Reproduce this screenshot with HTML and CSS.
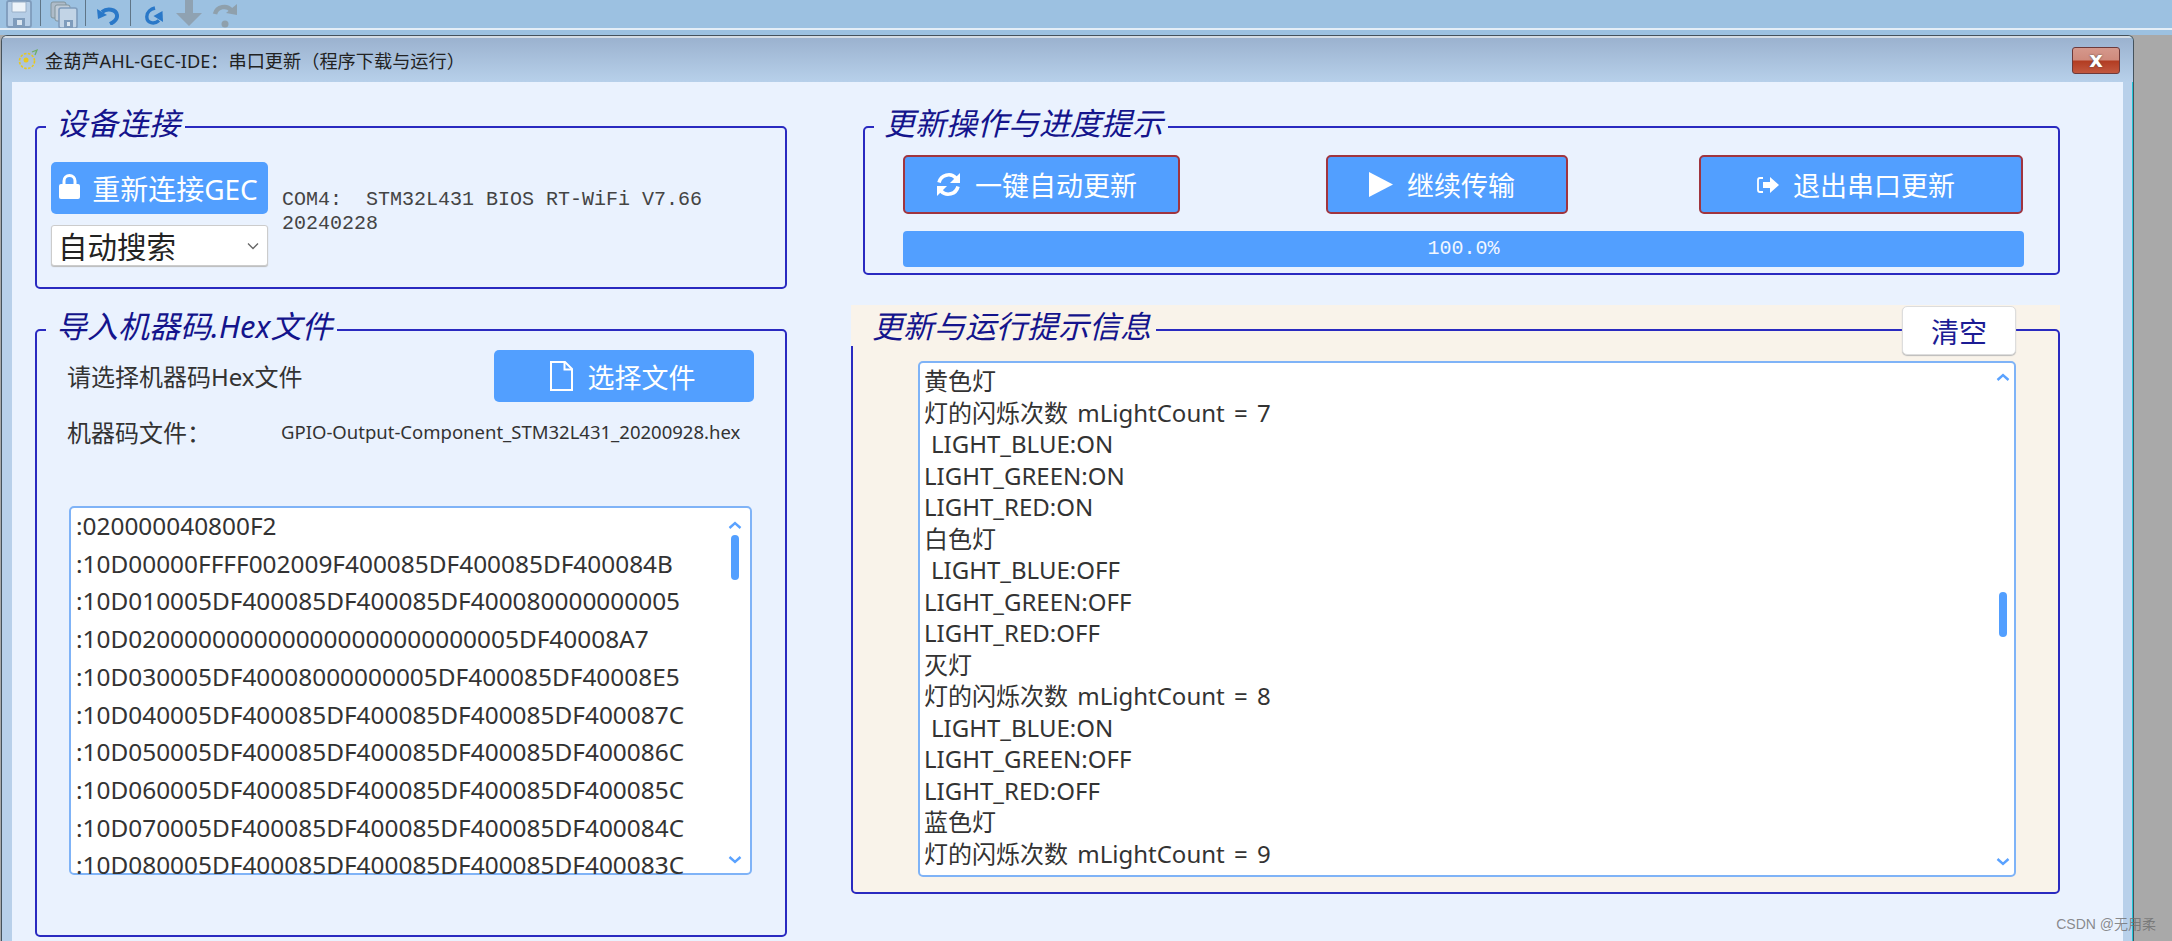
FILE: index.html
```
<!DOCTYPE html>
<html lang="zh-CN">
<head>
<meta charset="utf-8">
<title>金葫芦AHL-GEC-IDE</title>
<link rel="stylesheet" href="styles.css">
</head>
<body>
<header class="toolbar">
  <div class="tools">
    <svg class="ti ti-save" viewBox="0 0 28 28"><path d="M2 3q0-2 2-2h20q2 0 2 2v22q0 2-2 2H4q-2 0-2-2z" fill="#b5cde6" stroke="#7f9cbc" stroke-width="1.8"/><path d="M7 2h14v10H7z" fill="#edf3f9" stroke="#9ab0c8"/><path d="M8 18h12v9H8z" fill="#7f9cbc"/><path d="M12 20h5v5h-5z" fill="#dbe6f0"/></svg>
    <span class="sep s1"></span>
    <svg class="ti ti-saveall" viewBox="0 0 28 28"><path d="M1 4q0-2 2-2h11q2 0 2 2v14H3q-2 0-2-2z" fill="#aebbc8" stroke="#82949c"/><path d="M5 7q0-2 2-2h11q2 0 2 2v14H7q-2 0-2-2z" fill="#c0ccd8" stroke="#82949c"/><path d="M9 10q0-2 2-2h14q2 0 2 2v16q0 2-2 2H11q-2 0-2-2z" fill="#c2d4e6" stroke="#7f9cbc" stroke-width="1.6"/><path d="M14 20h9v8h-9z" fill="#7f9cbc"/><path d="M17 22h3v4h-3z" fill="#dbe6f0"/></svg>
    <span class="sep s2"></span>
    <svg class="ti ti-undo" viewBox="0 0 22 18"><path d="M5 5C10 1 19 2 20 8c.6 4-3 7-7 9" fill="none" stroke="#2a78c8" stroke-width="4"/><path d="M0 2l1 10 9-4z" fill="#2a78c8"/></svg>
    <span class="sep s3"></span>
    <svg class="ti ti-redo" viewBox="0 0 18 20"><path d="M14 14.500C9 19 2 17 1.800 11 1.600 6 6 3 10 2" fill="none" stroke="#2a78c8" stroke-width="3.400"/><path d="M18 16l-.5-11-9 5z" fill="#2a78c8"/></svg>
    <svg class="ti ti-down" viewBox="0 0 28 26"><path d="M10 0h8v13h9L14 26 1 13h9z" fill="#8fa2b2"/></svg>
    <svg class="ti ti-step" viewBox="0 0 26 26"><path d="M3 12C5 4 15 3 19 8" fill="none" stroke="#8fa0ac" stroke-width="4.500"/><path d="M25 2v11l-11-2z" fill="#8fa0ac"/><circle cx="13" cy="22" r="3.500" fill="#8fa0ac"/></svg>
  </div>
</header>

<main class="window">
  <div class="titlebar">
    <svg class="app-icon" viewBox="0 0 20 24"><circle cx="9" cy="13" r="7.500" fill="none" stroke="#e8c820" stroke-width="1.600" stroke-dasharray="2.500 1.500"/><circle cx="8" cy="12" r="2.500" fill="#e8c820"/><path d="M14 4l5-2-2 5" fill="none" stroke="#6fae66" stroke-width="1.300"/></svg>
    <span class="title">金葫芦AHL-GEC-IDE：串口更新（程序下载与运行）</span>
    <button class="close" type="button">x</button>
  </div>

  <div class="client">
    <div class="col-left">
      <section class="group group-conn">
        <h2 class="legend">设备连接</h2>
        <div class="conn-controls">
          <button class="btn btn-flat btn-reconnect" type="button">
            <svg class="ic-lock" viewBox="0 0 21 25"><path d="M5 11V7a5.500 5.500 0 0 1 11 0v4" fill="none" stroke="#fff" stroke-width="3"/><rect y="10" width="21" height="15" rx="2" fill="#fff"/></svg>
            <span>重新连接GEC</span>
          </button>
          <div class="select"><span>自动搜索</span>
            <svg class="ic-caret" viewBox="0 0 12 8"><path d="M1 1.500l5 5 5-5" fill="none" stroke="#666" stroke-width="1.300"/></svg>
          </div>
        </div>
        <p class="mono conn-info">COM4:  STM32L431 BIOS RT-WiFi V7.66<br>20240228</p>
      </section>

      <section class="group group-hex">
        <h2 class="legend">导入机器码.Hex文件</h2>
        <div class="hex-row">
          <span class="label">请选择机器码Hex文件</span>
          <button class="btn btn-flat btn-file" type="button">
            <svg class="ic-file" viewBox="0 0 25 30"><path d="M2 1h14l7 7v21H2z" fill="none" stroke="#fff" stroke-width="2"/><path d="M15.500 1v7.500H23" fill="none" stroke="#fff" stroke-width="2"/></svg>
            <span>选择文件</span>
          </button>
        </div>
        <div class="file-row">
          <span class="label file-label">机器码文件：</span>
          <span class="file-name">GPIO-Output-Component_STM32L431_20200928.hex</span>
        </div>
        <div class="listbox hex-box">
          <div class="hex-line">:020000040800F2</div>
          <div class="hex-line">:10D00000FFFF002009F400085DF400085DF400084B</div>
          <div class="hex-line">:10D010005DF400085DF400085DF400080000000005</div>
          <div class="hex-line">:10D0200000000000000000000000005DF40008A7</div>
          <div class="hex-line">:10D030005DF40008000000005DF400085DF40008E5</div>
          <div class="hex-line">:10D040005DF400085DF400085DF400085DF400087C</div>
          <div class="hex-line">:10D050005DF400085DF400085DF400085DF400086C</div>
          <div class="hex-line">:10D060005DF400085DF400085DF400085DF400085C</div>
          <div class="hex-line">:10D070005DF400085DF400085DF400085DF400084C</div>
          <div class="hex-line">:10D080005DF400085DF400085DF400085DF400083C</div>
          <svg class="chev chev-up" viewBox="0 0 14 8"><path d="M1.500 7L7 2l5.500 5" fill="none" stroke="#5aa2ff" stroke-width="2.400"/></svg>
          <span class="thumb thumb-hex"></span>
          <svg class="chev chev-down" viewBox="0 0 14 8"><path d="M1.500 1L7 6l5.500-5" fill="none" stroke="#5aa2ff" stroke-width="2.400"/></svg>
        </div>
      </section>
    </div>

    <div class="col-right">
      <section class="group group-update">
        <h2 class="legend">更新操作与进度提示</h2>
        <div class="action-row">
          <button class="btn btn-act act-auto" type="button">
            <svg class="ic-refresh" viewBox="0 0 25 25"><path d="M3 10.500A10 10 0 0 1 20 6" fill="none" stroke="#fff" stroke-width="3.600"/><path d="M24 1v10H14z" fill="#fff"/><path d="M22 14.500A10 10 0 0 1 5 19" fill="none" stroke="#fff" stroke-width="3.600"/><path d="M1 24V14h10z" fill="#fff"/></svg>
            <span>一键自动更新</span>
          </button>
          <button class="btn btn-act act-cont" type="button">
            <svg class="ic-play" viewBox="0 0 24 25"><path d="M0 0l24 12.500L0 25z" fill="#fff"/></svg>
            <span>继续传输</span>
          </button>
          <button class="btn btn-act act-exit" type="button">
            <svg class="ic-exit" viewBox="0 0 22 16"><path d="M6 1H3Q1 1 1 3v10q0 2 2 2h3" fill="none" stroke="#fff" stroke-width="1.800"/><path d="M6 5h7V0l9 8-9 8v-5H6z" fill="#fff"/></svg>
            <span>退出串口更新</span>
          </button>
        </div>
        <div class="progress mono">100.0%</div>
      </section>

      <div class="log-panel">
        <section class="group group-log">
          <h2 class="legend">更新与运行提示信息</h2>
          <button class="btn-clear" type="button">清空</button>
          <div class="listbox log-box">
            <div>黄色灯</div>
            <div class="count">灯的闪烁次数 mLightCount = 7</div>
            <div class="indent">LIGHT_BLUE:ON</div>
            <div>LIGHT_GREEN:ON</div>
            <div>LIGHT_RED:ON</div>
            <div>白色灯</div>
            <div class="indent">LIGHT_BLUE:OFF</div>
            <div>LIGHT_GREEN:OFF</div>
            <div>LIGHT_RED:OFF</div>
            <div>灭灯</div>
            <div class="count">灯的闪烁次数 mLightCount = 8</div>
            <div class="indent">LIGHT_BLUE:ON</div>
            <div>LIGHT_GREEN:OFF</div>
            <div>LIGHT_RED:OFF</div>
            <div>蓝色灯</div>
            <div class="count">灯的闪烁次数 mLightCount = 9</div>
            <svg class="chev chev-up" viewBox="0 0 14 8"><path d="M1.500 7L7 2l5.500 5" fill="none" stroke="#5aa2ff" stroke-width="2.400"/></svg>
            <span class="thumb thumb-log"></span>
            <svg class="chev chev-down" viewBox="0 0 14 8"><path d="M1.500 1L7 6l5.500-5" fill="none" stroke="#5aa2ff" stroke-width="2.400"/></svg>
          </div>
        </section>
      </div>
    </div>
  </div>
</main>
<div class="watermark">CSDN @无用柔</div>
</body>
</html>
```
FILE: styles.css
```
* { box-sizing: border-box; }
html, body { margin: 0; height: 100%; }
body {
  width: 2172px;
  height: 941px;
  overflow: hidden;
  position: relative;
  background: #a9a9a9;
  font-family: "Noto Sans", "Noto Sans CJK SC", sans-serif;
  color: #333;
}
button { font-family: inherit; }

.toolbar { height: 35px; background: #9cc1e1; }
.tools {
  display: flex;
  align-items: flex-start;
  height: 30px;
  padding-left: 5px;
  border-bottom: 2px solid #e4eef7;
}
.ti { display: block; flex: none; }
.ti-save { width: 28px; height: 28px; }
.sep { flex: none; width: 1px; height: 26px; background: #5f7587; }
.s1 { margin-left: 7px; }
.ti-saveall { width: 28px; height: 28px; margin-left: 9px; }
.s2 { margin-left: 7px; }
.ti-undo { width: 22px; height: 18px; margin: 7px 0 0 11px; }
.s3 { margin-left: 11px; }
.ti-redo { width: 18px; height: 20px; margin: 6px 0 0 14px; }
.ti-down { width: 28px; height: 26px; margin-left: 12px; }
.ti-step { width: 26px; height: 26px; margin: 2px 0 0 9px; }

.window {
  width: 2133px;
  height: 906px;
  margin-left: 1px;
  background: #b8d0ea;
  border: 1px solid #45525c;
  border-bottom: 0;
  border-radius: 6px 6px 0 0;
  box-shadow: inset -1px 0 0 #1fc6d6;
  overflow: hidden;
}
.titlebar {
  display: flex;
  align-items: center;
  height: 46px;
  padding-left: 16px;
  border-top: 2px solid #d4dce4;
  background: linear-gradient(#9bb2cf, #b7d0ea);
}
.app-icon { width: 20px; height: 24px; flex: none; }
.title { margin-left: 7px; font-size: 18.200px; color: #222; white-space: nowrap; }
.close {
  width: 48px;
  height: 27px;
  margin-left: auto;
  margin-right: 13px;
  padding: 0;
  border: 1px solid #6d3a3a;
  border-radius: 3px;
  background: linear-gradient(#d5988c 0, #cf8a7c 48%, #b23c22 52%, #c2583f 100%);
  color: #fff;
  font-family: "DejaVu Sans", sans-serif;
  font-size: 21px;
  font-weight: 700;
  line-height: 20px;
  text-shadow: 0 0 2px #444;
}

.client {
  display: flex;
  width: 2111px;
  height: 860px;
  margin-left: 10px;
  padding: 44px 0 0 23px;
  background: #eaf2fe;
}
.col-left { flex: none; width: 752px; }
.col-right { flex: none; width: 1209px; margin-left: 64px; }

.group {
  position: relative;
  border: 2px solid #2a2ac0;
  border-radius: 5px;
}
.legend {
  position: absolute;
  top: -25px;
  left: 9px;
  margin: 0;
  padding: 0 5px 0 10px;
  background: #eaf2fe;
  color: #14148c;
  font-size: 31px;
  font-style: italic;
  font-weight: 400;
  line-height: 40px;
  white-space: nowrap;
}

.btn { display: flex; align-items: center; justify-content: center; color: #fff; padding: 0; }
.btn-flat { border: 0; border-radius: 5px; background: #529fff; font-size: 27px; }
.btn-act {
  height: 59px;
  flex: none;
  gap: 14px;
  padding-right: 10px;
  border: 2px solid #a0353f;
  border-radius: 5px;
  background: #529fff;
  font-size: 27px;
}

.mono { font-family: "Liberation Mono", "Noto Sans CJK SC", monospace; font-size: 20px; }

.group-conn { display: flex; height: 163px; padding: 34px 0 0 14px; }
.conn-controls { flex: none; width: 217px; }
.btn-reconnect { width: 217px; height: 52px; gap: 12px; padding-right: 2px; font-size: 28px; }
.ic-lock { width: 21px; height: 25px; flex: none; margin-top: -3px; }
.select {
  display: flex;
  align-items: center;
  justify-content: space-between;
  height: 41px;
  margin-top: 11px;
  padding: 0 8px 0 6px;
  background: #fff;
  border: 1px solid #ccc;
  border-radius: 3px;
  box-shadow: 0 1px 1px #bbb;
  font-size: 29.500px;
  color: #222;
}
.ic-caret { width: 12px; height: 8px; flex: none; }
.conn-info { margin: 26px 0 0 14px; line-height: 24px; white-space: pre; color: #444; }

.group-hex { height: 608px; margin-top: 40px; padding: 19px 31px 0 30px; }
.label { font-size: 24px; color: #333; }
.hex-row { display: flex; align-items: center; justify-content: space-between; height: 52px; }
.hex-row .label { margin-top: -2px; }
.btn-file { width: 260px; height: 52px; gap: 14px; padding-right: 4px; }
.ic-file { width: 25px; height: 30px; flex: none; }
.file-row { display: flex; align-items: center; height: 32px; margin-top: 13px; }
.file-label { flex: none; width: 214px; }
.file-name { font-size: 18.500px; white-space: nowrap; color: #333; }

.listbox {
  position: relative;
  background: #fff;
  border: 2px solid #7fb3f7;
  border-radius: 5px;
}
.hex-box {
  width: 683px;
  height: 369px;
  margin: 59px 0 0 2px;
  padding: 0 0 0 5px;
  font-size: 24.400px;
  line-height: 37.700px;
}
.hex-line { white-space: nowrap; }
.hex-line:first-child { margin-top: -1px; }
.hex-line:last-child { line-height: 26px; }
.chev { position: absolute; width: 14px; height: 8px; }
.thumb { position: absolute; width: 8px; border-radius: 4px; background: #529fff; }
.hex-box .chev { right: 8px; }
.hex-box .chev-up { top: 13px; }
.hex-box .chev-down { bottom: 9px; }
.thumb-hex { top: 27px; right: 11px; height: 45px; }

.group-update { height: 149px; margin-left: 12px; padding: 27px 34px 0 38px; }
.action-row { display: flex; }
.act-auto { width: 277px; }
.act-cont { width: 242px; margin-left: 146px; }
.act-exit { width: 324px; margin-left: 131px; }
.ic-refresh { width: 25px; height: 25px; flex: none; }
.ic-play { width: 24px; height: 25px; flex: none; }
.ic-exit { width: 22px; height: 16px; flex: none; margin-top: 1px; }
.progress {
  height: 36px;
  margin-top: 17px;
  border-radius: 4px;
  background: #529fff;
  color: #f2f7ff;
  line-height: 36px;
  text-align: center;
}

.log-panel { height: 589px; margin-top: 30px; padding-top: 24px; background: #f9f3ea; }
.group-log { height: 565px; }
.group-log .legend { background: #f9f3ea; left: -2px; padding-left: 21px; }
.btn-clear {
  position: absolute;
  top: -25px;
  right: 42px;
  width: 114px;
  height: 49px;
  padding: 0;
  background: #fff;
  border: 1px solid #ddd;
  border-radius: 5px;
  box-shadow: 0 1px 1px #bbb;
  color: #1c1c94;
  font-size: 28px;
}
.log-box {
  width: 1098px;
  height: 516px;
  margin: 30px 0 0 65px;
  padding: 2px 0 0 4px;
  font-size: 24px;
  line-height: 31.500px;
  white-space: nowrap;
}
.count { word-spacing: 3px; }
.indent { padding-left: 7px; }
.log-box .chev { right: 4px; }
.log-box .chev-up { top: 10px; }
.log-box .chev-down { bottom: 9px; }
.thumb-log { top: 229px; right: 7px; height: 45px; }

.watermark {
  position: absolute;
  right: 16px;
  bottom: 8px;
  font-family: "Liberation Sans", "Noto Sans CJK SC", sans-serif;
  font-size: 14px;
  color: rgba(110, 110, 110, .8);
}
```
